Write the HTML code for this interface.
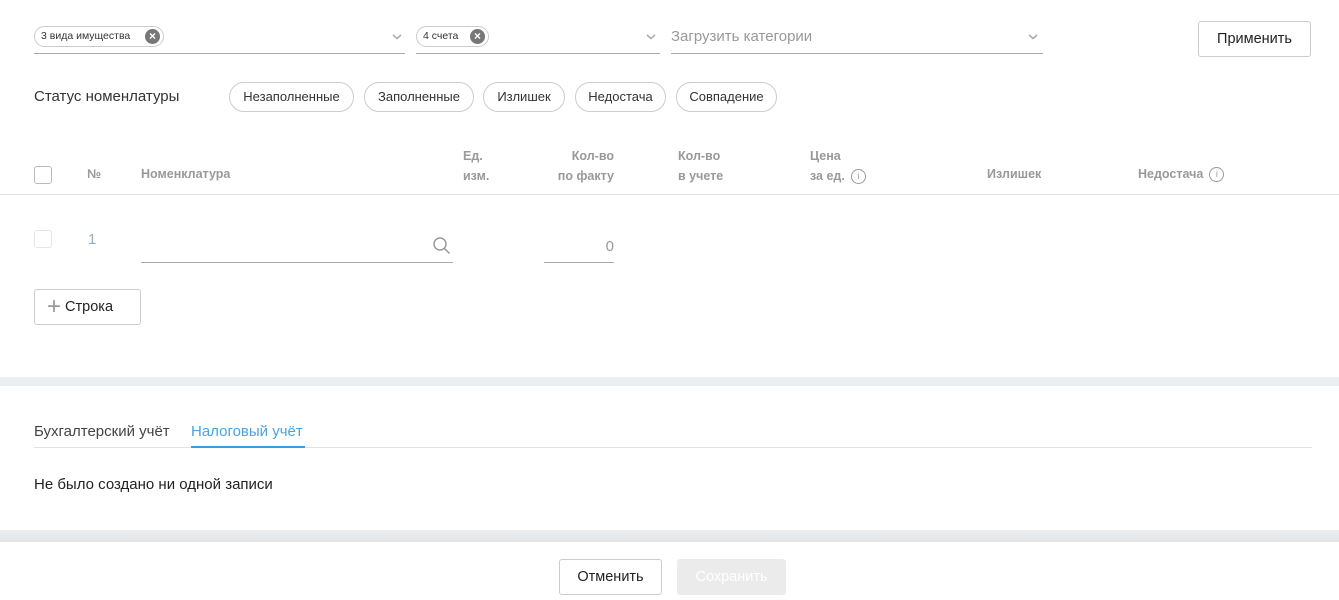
<!DOCTYPE html>
<html><head><meta charset="utf-8"><style>
*{margin:0;padding:0;box-sizing:border-box}
body{width:1339px;height:600px;position:relative;background:#fff;font-family:"Liberation Sans",sans-serif;color:#222;overflow:hidden}
.a{position:absolute;white-space:nowrap}
.ul{position:absolute;height:1px;background:#aaa}
.chip{position:absolute;height:21px;border:1px solid #ccc;border-radius:11px;font-size:10.5px;line-height:19px;padding-left:6px;color:#333}
.x{position:absolute;right:3px;top:2px;width:15px;height:15px;border-radius:50%;background:#777;color:#fff;font-size:12px;line-height:15px;text-align:center;font-weight:bold}
.pill{position:absolute;top:82px;height:30px;border:1px solid #ccc;border-radius:15px;font-size:13px;line-height:28px;text-align:center;color:#333}
.h{position:absolute;font-size:12.5px;font-weight:bold;color:#999;line-height:20px}
.btn{position:absolute;border:1px solid #ccc;border-radius:3px;font-size:14.5px;text-align:center;background:#fff}
.info{display:inline-block;width:15px;height:15px;border:1px solid #999;border-radius:50%;font-size:9px;line-height:13px;text-align:center;color:#999;vertical-align:middle;margin-left:6px;font-weight:normal}
</style></head><body>
<div class="chip" style="left:34px;top:26px;width:130px">3 вида имущества<span class="x">×</span></div>
<svg class="a" style="left:392px;top:33px" width="10" height="8"><path d="M1 2l4 3.5 4-3.5" stroke="#aaa" stroke-width="1.5" fill="none"/></svg>
<div class="ul" style="left:34px;top:53px;width:371px"></div>
<div class="chip" style="left:416px;top:26px;width:73px">4 счета<span class="x">×</span></div>
<svg class="a" style="left:646px;top:33px" width="10" height="8"><path d="M1 2l4 3.5 4-3.5" stroke="#aaa" stroke-width="1.5" fill="none"/></svg>
<div class="ul" style="left:416px;top:53px;width:244px"></div>
<div class="a" style="left:671px;top:28px;font-size:15px;color:#999">Загрузить категории</div>
<svg class="a" style="left:1028px;top:33px" width="10" height="8"><path d="M1 2l4 3.5 4-3.5" stroke="#aaa" stroke-width="1.5" fill="none"/></svg>
<div class="ul" style="left:671px;top:53px;width:372px"></div>
<div class="btn" style="left:1198px;top:21px;width:113px;height:36px;line-height:34px">Применить</div>

<div class="a" style="left:34px;top:88px;font-size:15px;color:#333">Статус номенлатуры</div>
<div class="pill" style="left:229px;width:125px">Незаполненные</div>
<div class="pill" style="left:364px;width:110px">Заполненные</div>
<div class="pill" style="left:483px;width:82px">Излишек</div>
<div class="pill" style="left:575px;width:91px">Недостача</div>
<div class="pill" style="left:676px;width:101px">Совпадение</div>

<div class="a" style="left:34px;top:166px;width:18px;height:18px;border:1px solid #bbb;border-radius:3px"></div>
<div class="h" style="left:87px;top:164px">№</div>
<div class="h" style="left:141px;top:164px">Номенклатура</div>
<div class="h" style="left:463px;top:146px">Ед.<br>изм.</div>
<div class="h" style="left:540px;top:146px;width:74px;text-align:right">Кол-во<br>по факту</div>
<div class="h" style="left:678px;top:146px">Кол-во<br>в учете</div>
<div class="h" style="left:810px;top:146px">Цена<br>за ед.<span class="info">i</span></div>
<div class="h" style="left:987px;top:164px">Излишек</div>
<div class="h" style="left:1138px;top:164px">Недостача<span class="info">i</span></div>
<div class="a" style="left:0;top:194px;width:1339px;height:1px;background:#e2e2e2"></div>

<div class="a" style="left:34px;top:230px;width:18px;height:18px;border:1px solid #e5e5e5;border-radius:3px"></div>
<div class="a" style="left:88px;top:231px;font-size:15px;color:#9ab">1</div>
<svg class="a" style="left:432px;top:236px" width="20" height="20"><circle cx="8" cy="8" r="6" stroke="#999" stroke-width="1.5" fill="none"/><path d="M12.5 12.5l5 5" stroke="#999" stroke-width="1.5"/></svg>
<div class="ul" style="left:141px;top:262px;width:312px"></div>
<div class="a" style="left:544px;top:238px;width:70px;text-align:right;font-size:15px;color:#999">0</div>
<div class="ul" style="left:544px;top:262px;width:70px"></div>
<div class="btn" style="left:34px;top:289px;width:107px;height:36px;line-height:34px;text-align:left;padding-left:12px"><span style="font-size:24px;color:#999;font-weight:300;vertical-align:-3px">+</span> Строка</div>

<div class="a" style="left:0;top:377px;width:1339px;height:9px;background:#eceff1"></div>
<div class="a" style="left:34px;top:423px;font-size:15px;color:#444">Бухгалтерский учёт</div>
<div class="a" style="left:191px;top:423px;font-size:15px;color:#4aa3df">Налоговый учёт</div>
<div class="a" style="left:34px;top:447px;width:1278px;height:1px;background:#e2e2e2"></div>
<div class="a" style="left:191px;top:446px;width:114px;height:2px;background:#3a9ede"></div>
<div class="a" style="left:34px;top:476px;font-size:15px;color:#222">Не было создано ни одной записи</div>
<div class="a" style="left:0;top:530px;width:1339px;height:12px;background:linear-gradient(#eceff1,#e2e4e6)"></div>
<div class="btn" style="left:559px;top:559px;width:103px;height:36px;line-height:34px">Отменить</div>
<div class="btn" style="left:677px;top:559px;width:109px;height:36px;line-height:34px;background:#ebebeb;border-color:#ebebeb;color:#fff">Сохранить</div>
</body></html>
